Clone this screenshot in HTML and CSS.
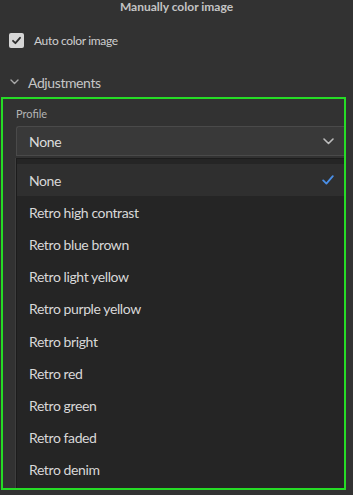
FILE: index.html
```html
<!DOCTYPE html>
<html lang="en">
<head>
    <meta charset="UTF-8">
    <meta name="viewport" content="width=device-width, initial-scale=1.0">
    <title>Manually color image</title>
    <link rel="stylesheet" href="styles.css">
</head>
<body>
    <div class="title">Manually color image</div>

    <div class="check-row">
        <span class="checkbox">
            <svg width="11" height="11" viewBox="0 0 11 11"><path d="M2 5.8 L4.4 8.2 L9 2.8" fill="none" stroke="#2d2d2d" stroke-width="1.8" stroke-linecap="round" stroke-linejoin="round"/></svg>
        </span>
        <span class="check-label">Auto color image</span>
    </div>

    <div class="section-header">
        <svg class="chevron" width="9" height="6" viewBox="0 0 9 6"><path d="M1 1 L4.5 4.5 L8 1" fill="none" stroke="#a8a8a8" stroke-width="1.4" stroke-linecap="round" stroke-linejoin="round"/></svg>
        <span>Adjustments</span>
    </div>

    <!-- Profile picker, highlighted -->
    <div class="panel">
        <div class="field-label">Profile</div>
        <div class="picker">
            <span>None</span>
            <svg width="11" height="7" viewBox="0 0 11 7"><path d="M1 1 L5.5 5.5 L10 1" fill="none" stroke="#bdbdbd" stroke-width="1.6" stroke-linecap="round" stroke-linejoin="round"/></svg>
        </div>
        <ul class="menu">
            <li class="menu-item selected">
                <span>None</span>
                <svg width="12" height="10" viewBox="0 0 12 10"><path d="M1.2 5.4 L4.4 8.6 L10.8 1.2" fill="none" stroke="#4a8fe7" stroke-width="1.8" stroke-linecap="round" stroke-linejoin="round"/></svg>
            </li>
            <li class="menu-item">Retro high contrast</li>
            <li class="menu-item">Retro blue brown</li>
            <li class="menu-item">Retro light yellow</li>
            <li class="menu-item">Retro purple yellow</li>
            <li class="menu-item">Retro bright</li>
            <li class="menu-item">Retro red</li>
            <li class="menu-item">Retro green</li>
            <li class="menu-item">Retro faded</li>
            <li class="menu-item">Retro denim</li>
        </ul>
    </div>
</body>
</html>
```

FILE: styles.css
```css
body {
    margin: 0;
    width: 353px;
    height: 495px;
    overflow: hidden;
    background-color: #323232;
    font-family: Lato, "Open Sans", sans-serif;
    color: #d4d4d4;
}
.title {
    height: 16px;
    line-height: 14px;
    text-align: center;
    font-size: 12px;
    font-weight: bold;
    color: #c4c4c4;
}
.check-row {
    display: flex;
    align-items: center;
    gap: 10px;
    height: 15px;
    margin-top: 17px;
    padding-left: 9px;
}
.checkbox {
    display: flex;
    align-items: center;
    justify-content: center;
    width: 15px;
    height: 15px;
    border-radius: 2px;
    background-color: #d6d6d6;
}
.check-label {
    font-size: 12px;
    letter-spacing: -0.35px;
    color: #cfcfcf;
}
.section-header {
    display: flex;
    align-items: center;
    gap: 9px;
    height: 18px;
    margin-top: 25px;
    padding-left: 10px;
    font-size: 14px;
    letter-spacing: -0.4px;
    color: #c6c6c6;
}
.panel {
    box-sizing: border-box;
    width: 345px;
    height: 393px;
    margin: 6px 0 0 1px;
    padding: 8px 0 0 13px;
    border: 2px solid #26dc26;
    overflow: hidden;
}
.field-label {
    line-height: 14px;
    font-size: 11px;
    color: #b4b4b4;
}
.picker {
    box-sizing: border-box;
    display: flex;
    align-items: center;
    justify-content: space-between;
    height: 30px;
    margin-top: 5px;
    padding: 0 10px 0 12px;
    border: 1px solid #4a4a4a;
    border-right: none;
    border-radius: 3px 0 0 0;
    background-color: #393939;
    font-size: 14px;
    letter-spacing: -0.3px;
    color: #dcdcdc;
}
.menu {
    list-style: none;
    margin: 2px 0 0 0;
    padding: 5px 0 0 0;
    height: 340px;
    border-left: 1px solid #1c1c1c;
    border-top: 1px solid #1c1c1c;
    background-color: #252525;
    box-shadow: -1px 0 0 #3e3e3e;
}
.menu-item {
    display: flex;
    align-items: center;
    justify-content: space-between;
    height: 32.2px;
    padding: 0 10px 0 12px;
    font-size: 14px;
    letter-spacing: -0.4px;
    color: #d8d8d8;
}
.menu-item.selected {
    background-color: #2f2f2f;
}
```
